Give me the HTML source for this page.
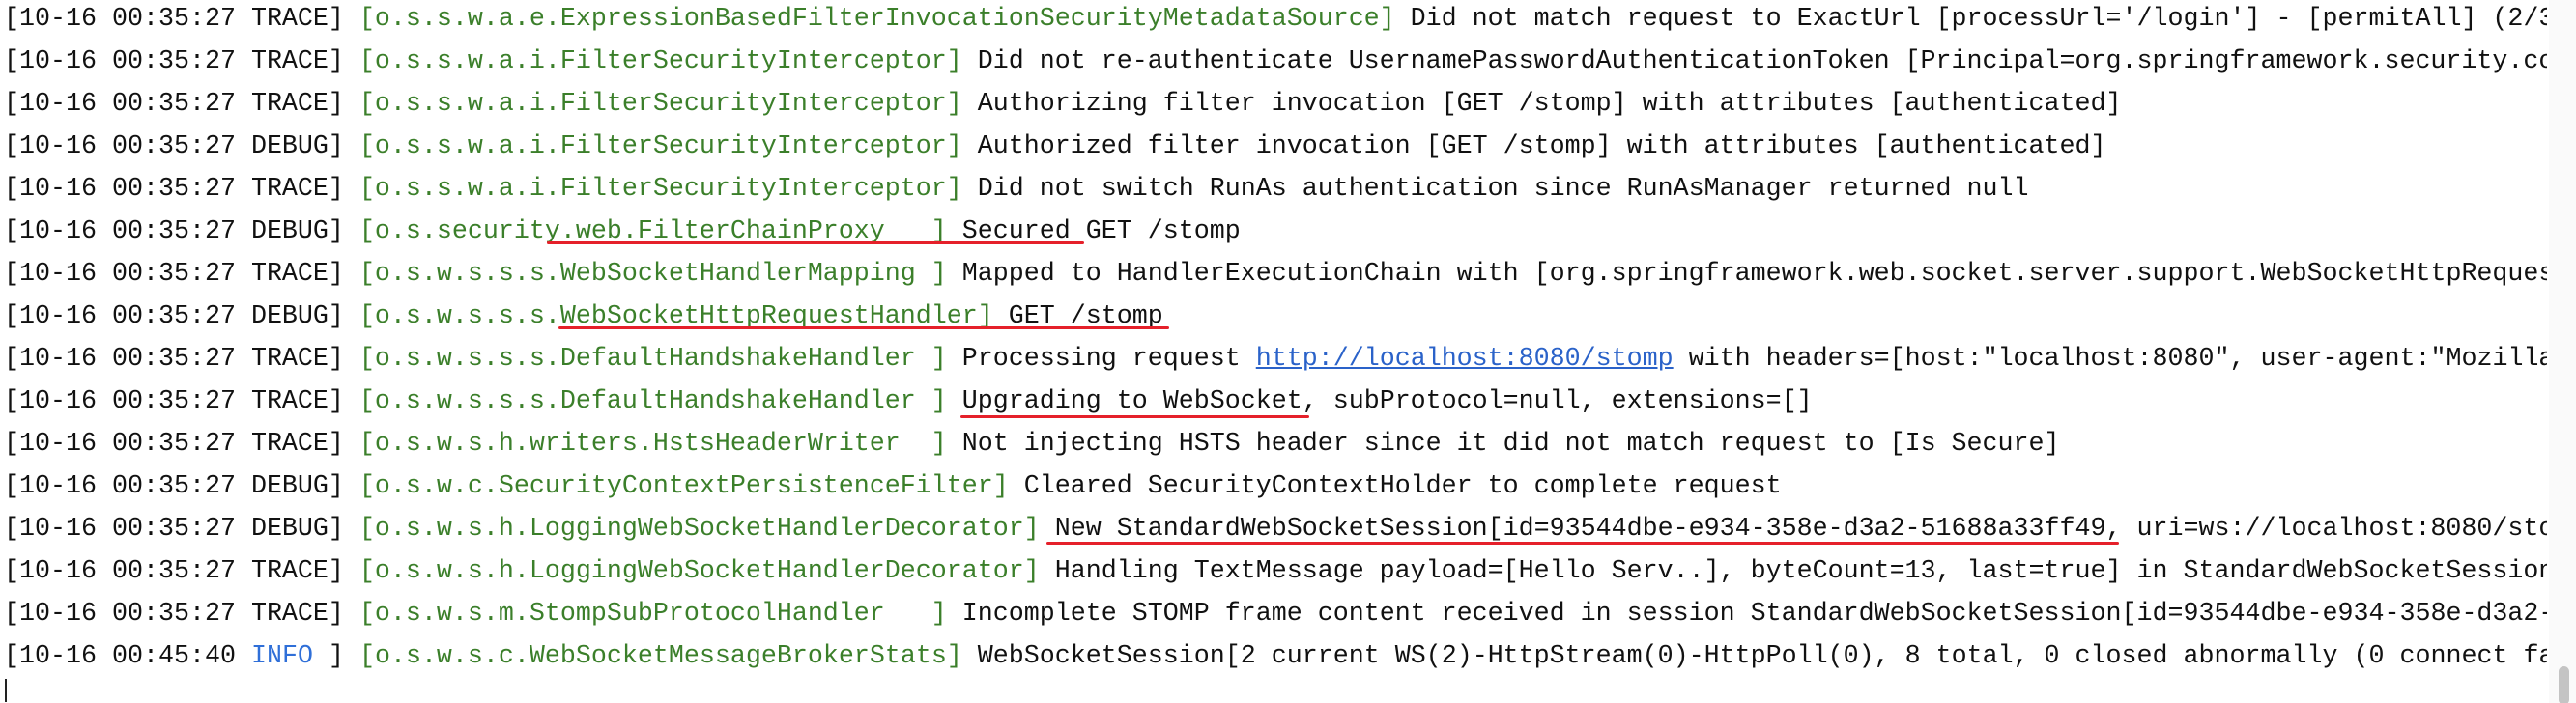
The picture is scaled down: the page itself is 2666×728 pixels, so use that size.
<!DOCTYPE html>
<html><head><meta charset="utf-8"><style>
html,body{margin:0;padding:0;background:#fff;width:2666px;height:728px;overflow:hidden;position:relative}
#log{position:absolute;left:4px;top:-2px;width:2632px;overflow:hidden;font-family:"Liberation Mono",monospace;font-size:26.67px;line-height:44px;color:#111;white-space:pre}
.g{color:#3b7f2a}.b{color:#2f6fd8}.l{color:#2a62c9;text-decoration:underline}
.u{position:absolute;height:3px;background:#e5202a;border-radius:2px}
#sb{position:absolute;left:2638px;top:0;width:28px;height:728px;background:#fafafa}
#th{position:absolute;left:2648px;top:690px;width:11px;height:40px;background:#c4c4c4;border-radius:6px}
#cur{position:absolute;left:5px;top:703px;width:2px;height:24px;background:#222}
</style></head><body>
<div id="log"><div>[10-16 00:35:27 TRACE] <span class="g">[o.s.s.w.a.e.ExpressionBasedFilterInvocationSecurityMetadataSource]</span> Did not match request to ExactUrl [processUrl='/login'] - [permitAll] (2/3)</div><div>[10-16 00:35:27 TRACE] <span class="g">[o.s.s.w.a.i.FilterSecurityInterceptor]</span> Did not re-authenticate UsernamePasswordAuthenticationToken [Principal=org.springframework.security.core</div><div>[10-16 00:35:27 TRACE] <span class="g">[o.s.s.w.a.i.FilterSecurityInterceptor]</span> Authorizing filter invocation [GET /stomp] with attributes [authenticated]</div><div>[10-16 00:35:27 DEBUG] <span class="g">[o.s.s.w.a.i.FilterSecurityInterceptor]</span> Authorized filter invocation [GET /stomp] with attributes [authenticated]</div><div>[10-16 00:35:27 TRACE] <span class="g">[o.s.s.w.a.i.FilterSecurityInterceptor]</span> Did not switch RunAs authentication since RunAsManager returned null</div><div>[10-16 00:35:27 DEBUG] <span class="g">[o.s.security.web.FilterChainProxy   ]</span> Secured GET /stomp</div><div>[10-16 00:35:27 TRACE] <span class="g">[o.s.w.s.s.s.WebSocketHandlerMapping ]</span> Mapped to HandlerExecutionChain with [org.springframework.web.socket.server.support.WebSocketHttpRequestHandler]</div><div>[10-16 00:35:27 DEBUG] <span class="g">[o.s.w.s.s.s.WebSocketHttpRequestHandler]</span> GET /stomp</div><div>[10-16 00:35:27 TRACE] <span class="g">[o.s.w.s.s.s.DefaultHandshakeHandler ]</span> Processing request <span class="l">http://localhost:8080/stomp</span> with headers=[host:"localhost:8080", user-agent:"Mozilla/5.0</div><div>[10-16 00:35:27 TRACE] <span class="g">[o.s.w.s.s.s.DefaultHandshakeHandler ]</span> Upgrading to WebSocket, subProtocol=null, extensions=[]</div><div>[10-16 00:35:27 TRACE] <span class="g">[o.s.w.s.h.writers.HstsHeaderWriter  ]</span> Not injecting HSTS header since it did not match request to [Is Secure]</div><div>[10-16 00:35:27 DEBUG] <span class="g">[o.s.w.c.SecurityContextPersistenceFilter]</span> Cleared SecurityContextHolder to complete request</div><div>[10-16 00:35:27 DEBUG] <span class="g">[o.s.w.s.h.LoggingWebSocketHandlerDecorator]</span> New StandardWebSocketSession[id=93544dbe-e934-358e-d3a2-51688a33ff49, uri=ws://localhost:8080/stomp]</div><div>[10-16 00:35:27 TRACE] <span class="g">[o.s.w.s.h.LoggingWebSocketHandlerDecorator]</span> Handling TextMessage payload=[Hello Serv..], byteCount=13, last=true] in StandardWebSocketSession[id</div><div>[10-16 00:35:27 TRACE] <span class="g">[o.s.w.s.m.StompSubProtocolHandler   ]</span> Incomplete STOMP frame content received in session StandardWebSocketSession[id=93544dbe-e934-358e-d3a2-51688a33ff49</div><div>[10-16 00:45:40 <span class="b">INFO</span> ] <span class="g">[o.s.w.s.c.WebSocketMessageBrokerStats]</span> WebSocketSession[2 current WS(2)-HttpStream(0)-HttpPoll(0), 8 total, 0 closed abnormally (0 connect failure</div></div>
<div class="u" style="left:566px;top:250px;width:556px"></div>
<div class="u" style="left:578px;top:338px;width:632px"></div>
<div class="u" style="left:994px;top:430px;width:361px"></div>
<div class="u" style="left:1083px;top:561px;width:1110px"></div>
<div id="cur"></div>
<div id="sb"></div><div id="th"></div>
</body></html>
